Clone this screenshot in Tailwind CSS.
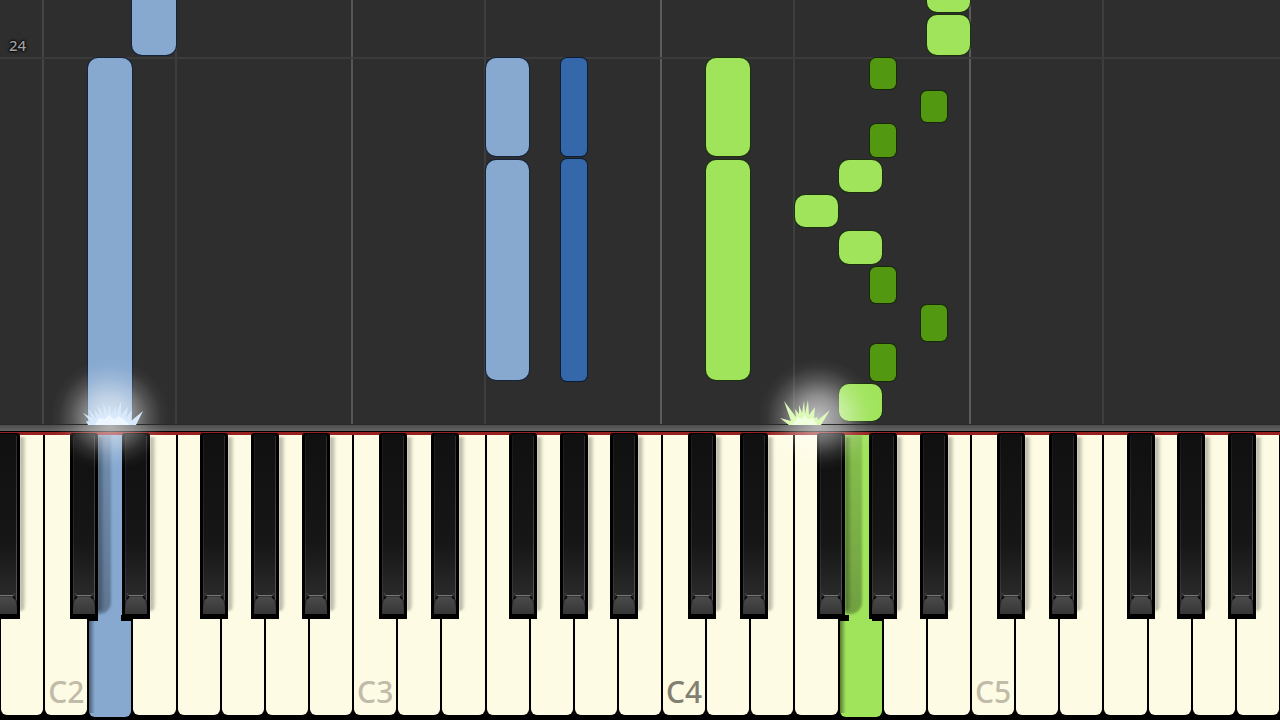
<!DOCTYPE html>
<html lang="en">
<head>
  <meta charset="UTF-8">
  <meta name="viewport" content="width=device-width, initial-scale=1.0">
  <title>Piano Roll</title>
  <script src="https://cdn.jsdelivr.net/npm/@tailwindcss/browser@4"></script>
</head>
<body class="bg-black">
  <main class="flex flex-col min-h-screen overflow-hidden font-['Noto_Sans','Liberation_Sans',sans-serif]">

    <!-- Falling notes -->
    <section id="roll" class="relative flex-1 overflow-hidden bg-[#2e2e2e]">
      <div id="lines"></div>
      <div class="absolute inset-x-0 top-[57px] h-[2px] bg-[#3b3b3b]"></div>
      <p class="absolute left-[9px] top-[35px] text-[15px] leading-5 font-medium text-[#a0a0a0] [text-shadow:0_0_3px_#000,0_0_3px_#000,0_0_2px_#000]">24</p>
      <div id="notes"></div>
      <div id="glows"></div>
    </section>

    <!-- Rail between the roll and the keys -->
    <div class="relative z-10 h-[7px] border-t border-[#2a2a2a] bg-linear-to-b from-[#4c4c4c] to-[#646464]">
      <div id="sparks"></div>
    </div>

    <!-- Keyboard -->
    <section class="relative h-[289px] overflow-hidden bg-black pt-px">
      <div class="h-[3px] bg-[#96211f]"></div>
      <div id="whites" class="grid grid-cols-[repeat(29,minmax(0,1fr))] grid-rows-[280px] gap-[2px] px-px"></div>
      <div id="blacks"></div>
    </section>
  </main>

  <svg class="absolute w-0 h-0" aria-hidden="true">
    <defs>
      <linearGradient id="body" x1="0" y1="0" x2="0" y2="1">
        <stop offset="0" stop-color="#101010"/>
        <stop offset="0.6" stop-color="#161616"/>
        <stop offset="1" stop-color="#303030"/>
      </linearGradient>
      <linearGradient id="edge" x1="0" y1="0" x2="0" y2="1">
        <stop offset="0" stop-color="#2c2c2c"/>
        <stop offset="1" stop-color="#585858"/>
      </linearGradient>
      <linearGradient id="cap" x1="0" y1="0" x2="0" y2="1">
        <stop offset="0" stop-color="#4a4a4a"/>
        <stop offset="1" stop-color="#363636"/>
      </linearGradient>
      <symbol id="blackKey" viewBox="0 0 28 186" preserveAspectRatio="none">
        <path d="M0 3 Q0 0 3 0 H25 Q28 0 28 3 V186 H0Z" fill="#000"/>
        <path d="M3 3 Q3 1 5 1 H23 Q25 1 25 3 V181 H3Z" fill="url(#body)"/>
        <path d="M24 3 H25 V180 H24Z" fill="url(#edge)"/>
        <path d="M3 3 H4 V180 H3Z" fill="url(#edge)" opacity="0.4"/>
        <path d="M3 181 V168 L6 163 H22 L25 168 V181Z" fill="#252525"/>
        <path d="M3 181 Q3 165 8 164 H20 Q25 165 25 181Z" fill="url(#cap)"/>
        <path d="M5 160 L7 163 H21 L23 160" fill="none" stroke="#4a4a4a" stroke-width="1"/>
        <path d="M7 162.500 H21" stroke="#777" stroke-width="1"/>
        <path d="M5 166 L7 163.500 M23 166 L21 163.500" stroke="#080808" stroke-width="1.500"/>
      </symbol>
      <symbol id="blueSpark" viewBox="0 0 60 24">
        <path d="M5 24 L3 20 L8 21 L0 12 L9 17 L5 8 L13 17 L11 8 L17 15 L14 4 L21 14 L20 2 L25 13 L26 3 L29 14 L33 5 L33 14 L38 0 L38 14 L45 6 L43 17 L49 9 L48 20 L60 10 L53 24Z" fill="#d8e9fb"/>
        <path d="M12 24 L16 17 L22 18 L26 14 L31 18 L36 15 L41 19 L47 24Z" fill="#eef7ff"/>
      </symbol>
      <symbol id="greenSpark" viewBox="0 0 50 26">
        <path d="M9 26 L0 19 L11 22 L4 2 L16 18 L15 10 L19 15 L19 6 L22 14 L24 2 L25 15 L28 1 L29 16 L35 8 L34 19 L37 18 L38 21 L50 11 L41 26Z" fill="#dcfab8"/>
        <path d="M12 26 L18 18 L22 20 L25 16 L28 20 L33 19 L37 26Z" fill="#f0ffdd"/>
      </symbol>
    </defs>
  </svg>

  <script>
    // x positions are on a 1280 wide stage and become percentages
    const pct = (n) => (n / 12.8) + '%';

    const colors = {
      blue: 'bg-[#87a9d0] rounded-[10px] shadow-[0_0_0_1px_#15233a]',
      darkBlue: 'bg-[#3568ab] rounded-[6px] shadow-[0_0_0_1px_#0d1c33]',
      green: 'bg-[#a0e45c] rounded-[10px] shadow-[0_0_0_1px_#1c3010]',
      darkGreen: 'bg-[#539811] rounded-[6px] shadow-[0_0_0_1px_#162a08]'
    };

    // x, color of the line
    const lines = [
      [42, 'bg-[#444444]'], [175, 'bg-[#3d3d3d]'], [351, 'bg-[#555555]'], [484, 'bg-[#3d3d3d]'],
      [660, 'bg-[#5c5c5c]'], [793, 'bg-[#3d3d3d]'], [969, 'bg-[#5c5c5c]'], [1102, 'bg-[#3d3d3d]']
    ];

    // x, y, width, height, color
    const notes = [
      [132, -20, 44, 75, 'blue'],
      [88, 58, 44, 380, 'blue'],
      [486, 58, 43, 98, 'blue'],
      [486, 160, 43, 220, 'blue'],
      [561, 58, 26, 98, 'darkBlue'],
      [561, 159, 26, 222, 'darkBlue'],
      [706, 58, 44, 98, 'green'],
      [706, 160, 44, 220, 'green'],
      [927, -20, 43, 32, 'green'],
      [927, 15, 43, 40, 'green'],
      [870, 58, 26, 31, 'darkGreen'],
      [921, 91, 26, 31, 'darkGreen'],
      [870, 124, 26, 33, 'darkGreen'],
      [839, 160, 43, 32, 'green'],
      [795, 195, 43, 32, 'green'],
      [839, 231, 43, 33, 'green'],
      [870, 267, 26, 36, 'darkGreen'],
      [921, 305, 26, 36, 'darkGreen'],
      [870, 344, 26, 37, 'darkGreen'],
      [839, 384, 43, 37, 'green']
    ];

    const blackKeys = [-8, 70, 122, 200, 251, 302, 379, 431, 509, 560, 610, 688, 740, 817, 869, 920, 997, 1049, 1127, 1177, 1228];

    const labels = { 1: 'C2', 8: 'C3', 15: 'C4', 22: 'C5' };
    const pressed = { 2: 'bg-[#87a9d0]', 19: 'bg-[#a0e45c]' };

    document.getElementById('lines').innerHTML = lines.map(([x, c]) =>
      `<div class="absolute inset-y-0 w-[2px] ${c}" style="left:${pct(x)}"></div>`).join('');

    document.getElementById('notes').innerHTML = notes.map(([x, y, w, h, c]) =>
      `<div class="absolute ${colors[c]}" style="left:${pct(x)};top:${y}px;width:${pct(w)};height:${h}px"></div>`).join('');

    // strong light on the roll, weaker light over the rail and the keys
    document.getElementById('glows').innerHTML = [110, 818].map((x) =>
      `<div class="absolute -bottom-[54px] size-[120px] -translate-x-1/2 bg-[radial-gradient(closest-side,rgb(255_255_255/0.7),rgb(255_255_255/0.48)_35%,rgb(255_255_255/0.18)_65%,rgb(255_255_255/0.04)_85%,transparent)]" style="left:${pct(x)}"></div>`).join('');

    document.getElementById('sparks').innerHTML = [110, 818].map((x) =>
      `<div class="absolute top-0 h-[50px] w-[120px] -translate-x-1/2 bg-[radial-gradient(60px_46px_at_50%_0,rgb(255_255_255/0.55),rgb(255_255_255/0.35)_35%,rgb(255_255_255/0.12)_65%,rgb(255_255_255/0.03)_85%,transparent)]" style="left:${pct(x)}"></div>`).join('') +
      `<svg class="absolute bottom-[6px] w-[60px] h-[24px] -translate-x-1/2" style="left:${pct(113)}"><use href="#blueSpark"/></svg>` +
      `<svg class="absolute bottom-[6px] w-[50px] h-[26px] -translate-x-1/2" style="left:${pct(805)}"><use href="#greenSpark"/></svg>`;

    let whites = '';
    for (let i = 0; i < 29; i++) {
      const label = labels[i] || '';
      const tone = label === 'C4' ? 'text-[#827f70]' : 'text-[#c0bca9]';
      if (pressed[i]) {
        whites += `<button type="button" aria-label="Pressed key" class="relative h-[282px] overflow-hidden rounded-b-md ${pressed[i]}">
          <span class="absolute left-0 top-[184px] bottom-[4px] w-[6px] bg-linear-to-r from-black/45 to-transparent"></span>
          <span class="absolute left-[5px] top-0 h-[179px] w-[17px] rounded-br-xl bg-linear-to-b from-black/15 to-black/30 blur-[1px]"></span>
          <span class="absolute left-0 top-[180px] h-[6px] w-[9px] bg-black"></span>
          <span class="absolute right-0 top-[180px] h-[6px] w-[10px] bg-black"></span>
        </button>`;
      } else {
        whites += `<button type="button" aria-label="${label || 'White key'}" class="flex items-end pl-[3px] pb-[3px] rounded-b-md bg-[#fefbe4] text-[30px] leading-10 font-medium ${tone}">${label}</button>`;
      }
    }
    document.getElementById('whites').innerHTML = whites;

    document.getElementById('blacks').innerHTML = blackKeys.map((x) =>
      `<button type="button" aria-label="Black key" class="absolute top-[2px] h-[186px]" style="left:${pct(x)};width:${pct(28)}">
        <span class="absolute left-full top-[4px] h-[174px] w-[6px] rounded-br-lg bg-linear-to-r from-black/35 to-black/5 blur-[1px]"></span>
        <svg class="relative size-full"><use href="#blackKey"/></svg>
      </button>`).join('');
  </script>
</body>
</html>
